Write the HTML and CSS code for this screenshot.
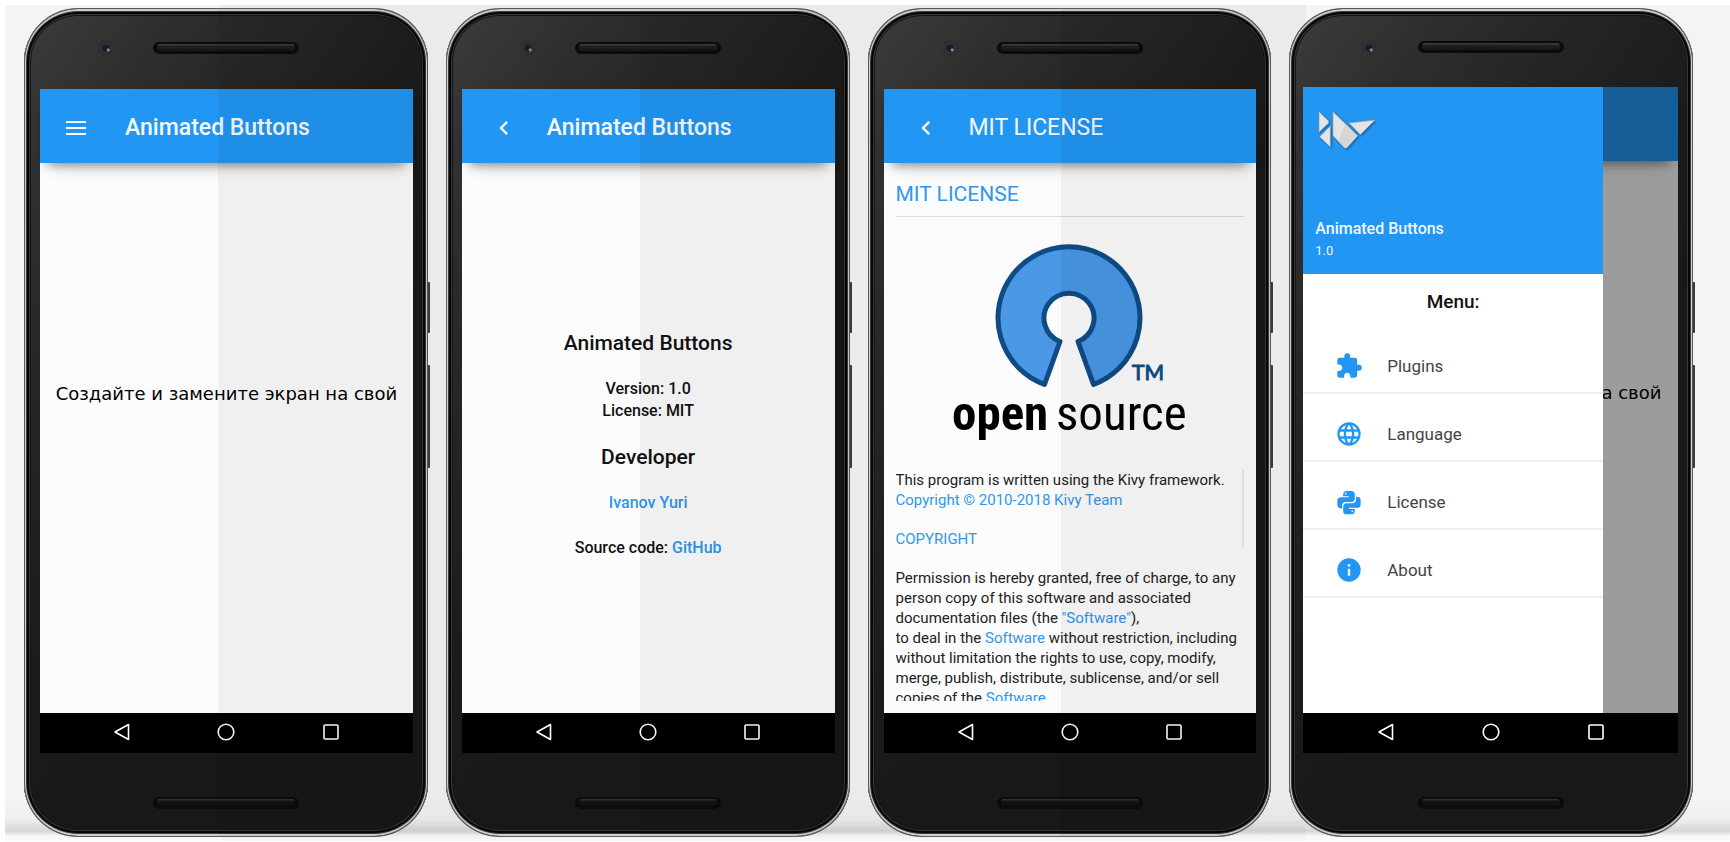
FILE: index.html
```html
<!DOCTYPE html>
<html lang="en">
<head>
<meta charset="utf-8">
<title>Animated Buttons</title>
<link rel="stylesheet" href="styles.css">
</head>
<body>
<svg width="0" height="0" class="defs" aria-hidden="true">
  <symbol id="i-back" viewBox="0 0 20 20"><path d="M16.500 2.500V17.500L3 10Z" fill="none" stroke="#fff" stroke-width="1.600" stroke-linejoin="round"/></symbol>
  <symbol id="i-home" viewBox="0 0 20 20"><circle cx="10" cy="10" r="7.800" fill="none" stroke="#fff" stroke-width="1.600"/></symbol>
  <symbol id="i-recent" viewBox="0 0 20 20"><rect x="3" y="3" width="14" height="14" rx="1" fill="none" stroke="#fff" stroke-width="1.600"/></symbol>
  <symbol id="i-chevron" viewBox="0 0 24 24"><path d="M15.410 16.580L10.830 12l4.580-4.590L14 6l-6 6 6 6z" fill="#fff"/></symbol>
  <symbol id="i-menu" viewBox="0 0 20 14"><path d="M0 0h20v2H0zM0 6h20v2H0zM0 12h20v2H0z" fill="#fff"/></symbol>
</svg>

<main class="stage">
  <section class="phone">
    <div class="side-keys"></div>
    <div class="bezel bezel-top"><span class="camera"></span><span class="speaker"></span></div>
    <div class="screen">
      <header class="toolbar">
        <button class="tool tool-menu" aria-label="Open menu"><svg width="20" height="14"><use href="#i-menu"/></svg></button>
        <h1 class="title">Animated Buttons</h1>
      </header>
      <div class="body body-empty"><p class="placeholder" lang="ru">Создайте и замените экран на свой</p></div>
    </div>
    <div class="sysnav">
      <button aria-label="Back"><svg width="20" height="20"><use href="#i-back"/></svg></button>
      <button aria-label="Home"><svg width="20" height="20"><use href="#i-home"/></svg></button>
      <button aria-label="Recent apps"><svg width="20" height="20"><use href="#i-recent"/></svg></button>
    </div>
    <div class="bezel bezel-bottom"><span class="speaker"></span></div>
    <div class="sheen"></div>
  </section>

  <section class="phone">
    <div class="side-keys"></div>
    <div class="bezel bezel-top"><span class="camera"></span><span class="speaker"></span></div>
    <div class="screen">
      <header class="toolbar">
        <button class="tool" aria-label="Go back"><svg width="28" height="28"><use href="#i-chevron"/></svg></button>
        <h1 class="title">Animated Buttons</h1>
      </header>
      <div class="body body-about">
        <h2 class="about-title">Animated Buttons</h2>
        <p class="about-text">Version: 1.0<br>License: MIT</p>
        <h2 class="about-title">Developer</h2>
        <p class="about-text"><a href="#author">Ivanov Yuri</a></p>
        <p class="about-text">Source code: <a href="#github">GitHub</a></p>
      </div>
    </div>
    <div class="sysnav">
      <button aria-label="Back"><svg width="20" height="20"><use href="#i-back"/></svg></button>
      <button aria-label="Home"><svg width="20" height="20"><use href="#i-home"/></svg></button>
      <button aria-label="Recent apps"><svg width="20" height="20"><use href="#i-recent"/></svg></button>
    </div>
    <div class="bezel bezel-bottom"><span class="speaker"></span></div>
    <div class="sheen"></div>
  </section>

  <section class="phone">
    <div class="side-keys"></div>
    <div class="bezel bezel-top"><span class="camera"></span><span class="speaker"></span></div>
    <div class="screen">
      <header class="toolbar">
        <button class="tool" aria-label="Go back"><svg width="28" height="28"><use href="#i-chevron"/></svg></button>
        <h1 class="title title-regular">MIT LICENSE</h1>
      </header>
      <div class="body body-license">
        <h2 class="license-title">MIT LICENSE</h2>
        <svg class="osi" width="240" height="206" viewBox="0 0 240 206">
          <path d="M94.500 144.500A71 71 0 1 1 143.500 144.500L128 101.500A25 25 0 1 0 110 101.500Z" fill="#4a98e6" stroke="#0f4c86" stroke-width="5" stroke-linejoin="round"/>
          <text class="osi-tm" x="182" y="140">TM</text>
          <text class="osi-open" x="2" y="190">open</text>
          <text class="osi-source" x="106" y="190">source</text>
        </svg>
        <div class="license-scroll">
          <div class="license-text">
            <p>This program is written using the Kivy framework.<br><a href="#kivy">Copyright © 2010-2018 Kivy Team</a></p>
            <p><a href="#copyright">COPYRIGHT</a></p>
            <p>Permission is hereby granted, free of charge, to any<br>person copy of this software and associated<br>documentation files (the <a href="#software">"Software"</a>),<br>to deal in the <a href="#software">Software</a> without restriction, including<br>without limitation the rights to use, copy, modify,<br>merge, publish, distribute, sublicense, and/or sell<br>copies of the <a href="#software">Software</a>.</p>
          </div>
          <span class="scroll-thumb"></span>
        </div>
      </div>
    </div>
    <div class="sysnav">
      <button aria-label="Back"><svg width="20" height="20"><use href="#i-back"/></svg></button>
      <button aria-label="Home"><svg width="20" height="20"><use href="#i-home"/></svg></button>
      <button aria-label="Recent apps"><svg width="20" height="20"><use href="#i-recent"/></svg></button>
    </div>
    <div class="bezel bezel-bottom"><span class="speaker"></span></div>
    <div class="sheen"></div>
  </section>

  <section class="phone phone-drawer">
    <div class="side-keys"></div>
    <div class="bezel bezel-top"><span class="camera"></span><span class="speaker"></span></div>
    <div class="screen">
      <header class="toolbar"></header>
      <div class="body body-empty"><p class="placeholder" lang="ru">Создайте и замените экран на свой</p></div>
      <div class="scrim"></div>
      <nav class="drawer">
        <div class="drawer-head">
          <svg class="kivy" width="62" height="42" viewBox="105 326 186 126">
            <g fill="#e4e4e4" stroke="#9aa4ad" stroke-width="2" stroke-linejoin="round">
              <path d="M117 334L146 362V368L117 396Z"/>
              <path d="M151 377V440L119 409Z"/>
              <path d="M159 334L233 406L200 443H194L159 406Z"/>
              <path d="M207 368L285 359L241 403Z"/>
            </g>
            <path d="M194 374L232 407L200 442H194L175 422Z" fill="#d6d6d6"/>
          </svg>
          <div class="drawer-name">Animated Buttons</div>
          <div class="drawer-version">1.0</div>
        </div>
        <h2 class="drawer-label">Menu:</h2>
        <a class="item" href="#plugins">
          <svg width="28" height="28" viewBox="0 0 24 24"><path d="M20.500,11H19V7C19,5.890 18.100,5 17,5H13V3.500A2.500,2.500 0 0,0 10.500,1A2.500,2.500 0 0,0 8,3.500V5H4A2,2 0 0,0 2,7V10.800H3.500C5,10.800 6.200,12 6.200,13.500C6.200,15 5,16.200 3.500,16.200H2V20A2,2 0 0,0 4,22H7.800V20.500C7.800,19 9,17.800 10.500,17.800C12,17.800 13.200,19 13.200,20.500V22H17A2,2 0 0,0 19,20V16H20.500A2.500,2.500 0 0,0 23,13.500A2.500,2.500 0 0,0 20.500,11Z"/></svg>
          <span>Plugins</span></a>
        <a class="item" href="#language">
          <svg width="28" height="28" viewBox="0 0 24 24"><path d="M16.360,14C16.440,13.340 16.500,12.680 16.500,12C16.500,11.320 16.440,10.660 16.360,10H19.740C19.900,10.640 20,11.310 20,12C20,12.690 19.900,13.360 19.740,14M14.590,19.560C15.190,18.450 15.650,17.250 15.970,16H18.920C17.960,17.650 16.430,18.930 14.590,19.560M14.340,14H9.660C9.560,13.340 9.500,12.680 9.500,12C9.500,11.320 9.560,10.650 9.660,10H14.340C14.430,10.650 14.500,11.320 14.500,12C14.500,12.680 14.430,13.340 14.340,14M12,19.960C11.170,18.760 10.500,17.430 10.090,16H13.910C13.500,17.430 12.830,18.760 12,19.960M8,8H5.080C6.030,6.340 7.570,5.060 9.400,4.440C8.800,5.550 8.350,6.750 8,8M5.080,16H8C8.350,17.250 8.800,18.450 9.400,19.560C7.570,18.930 6.030,17.650 5.080,16M4.260,14C4.100,13.360 4,12.690 4,12C4,11.310 4.100,10.640 4.260,10H7.640C7.560,10.660 7.500,11.320 7.500,12C7.500,12.680 7.560,13.340 7.640,14M12,4.030C12.830,5.230 13.500,6.570 13.910,8H10.090C10.500,6.570 11.170,5.230 12,4.030M18.920,8H15.970C15.650,6.750 15.190,5.550 14.590,4.440C16.430,5.070 17.960,6.340 18.920,8M12,2C6.470,2 2,6.500 2,12A10,10 0 0,0 12,22A10,10 0 0,0 22,12A10,10 0 0,0 12,2Z"/></svg>
          <span>Language</span></a>
        <a class="item" href="#license">
          <svg width="28" height="28" viewBox="0 0 24 24"><path d="M19.140,7.500A2.860,2.860 0 0,1 22,10.360V14.140A2.860,2.860 0 0,1 19.140,17H12C12,17.390 12.320,17.960 12.710,17.960H17V19.640A2.860,2.860 0 0,1 14.140,22.500H9.860A2.860,2.860 0 0,1 7,19.640V15.890C7,14.310 8.280,13.040 9.860,13.040H15.110C16.690,13.040 17.960,11.760 17.960,10.180V7.500H19.140M14.860,19.290C14.460,19.290 14.140,19.590 14.140,20.180C14.140,20.770 14.460,20.890 14.860,20.890A0.710,0.710 0 0,0 15.570,20.180C15.570,19.590 15.250,19.290 14.860,19.290M4.860,17.500C3.280,17.500 2,16.220 2,14.640V10.860C2,9.280 3.280,8 4.860,8H12C12,7.610 11.680,7.040 11.290,7.040H7V5.360C7,3.780 8.280,2.500 9.860,2.500H14.140C15.720,2.500 17,3.780 17,5.360V9.110C17,10.690 15.720,11.960 14.140,11.960H8.890C7.310,11.960 6.040,13.240 6.040,14.820V17.500H4.860M9.140,5.710C9.540,5.710 9.860,5.410 9.860,4.820C9.860,4.230 9.540,4.110 9.140,4.110C8.750,4.110 8.430,4.230 8.430,4.820C8.430,5.410 8.750,5.710 9.140,5.710Z"/></svg>
          <span>License</span></a>
        <a class="item" href="#about">
          <svg width="28" height="28" viewBox="0 0 24 24"><path d="M13,9H11V7H13M13,17H11V11H13M12,2A10,10 0 0,0 2,12A10,10 0 0,0 12,22A10,10 0 0,0 22,12A10,10 0 0,0 12,2Z"/></svg>
          <span>About</span></a>
      </nav>
    </div>
    <div class="sysnav">
      <button aria-label="Back"><svg width="20" height="20"><use href="#i-back"/></svg></button>
      <button aria-label="Home"><svg width="20" height="20"><use href="#i-home"/></svg></button>
      <button aria-label="Recent apps"><svg width="20" height="20"><use href="#i-recent"/></svg></button>
    </div>
    <div class="bezel bezel-bottom"><span class="speaker"></span></div>
  </section>
</main>
</body>
</html>
```

FILE: styles.css
```css
* { box-sizing: border-box; }

body {
  margin: 0;
  background: #fff;
  font-family: Roboto, "Liberation Sans", sans-serif;
  color: #111;
}

h1, h2, p { margin: 0; }
a { color: #2f97ee; text-decoration: none; }
button { border: 0; padding: 0; background: none; }
svg { display: block; flex: none; }
.defs { position: absolute; }

.stage {
  display: grid;
  grid-template-columns: repeat(4, minmax(0, 1fr));
  grid-template-rows: minmax(0, 1fr);
  gap: 18px;
  height: 100vh;
  min-height: 780px;
  padding: 3px 37px 4px 19px;
  border: solid #fff;
  border-width: 5px 0 1px 5px;
  background:
    linear-gradient(to top, rgba(255,255,255,.6), rgba(255,255,255,.3) 5px, rgba(0,0,0,.12) 10px, rgba(0,0,0,.02) 22px, transparent 40px),
    linear-gradient(to right, #f4f4f4 12.5%, #ebebeb 12.5% 75.4%, #f4f4f4 75.4%);
  background-clip: padding-box;
}

.phone {
  position: relative;
  display: flex;
  flex-direction: column;
  padding: 0 15px 0 16px;
  border: 1px solid #5a5a5a;
  border-width: 1px 0;
  border-radius: 54px;
  background: linear-gradient(125deg, #3c3c3c, #2c2c2c 18%, #1e1e1e 42%, #181818 60%);
  box-shadow:
    inset 1px 0 #5a5a5a, inset -1px 0 #5a5a5a,
    inset 0 0 0 2px #cfcfcf,
    inset 0 0 0 3px #3c3c3c,
    inset 0 0 0 5px #060606,
    inset 0 0 0 6px #383838,
    inset 0 0 0 7px #161616;
}

/* power and volume keys on the right edge */
.side-keys::before,
.side-keys::after {
  content: "";
  position: absolute;
  left: 100%;
  top: 273px;
  width: 2px;
  height: 51px;
  border-radius: 0 1px 1px 0;
  background: #3a3a3a;
}
.side-keys::after { top: 356px; height: 103px; }

.bezel { position: relative; flex: none; display: flex; justify-content: center; }
.bezel-top { height: 80px; padding-top: 33px; }
.bezel-bottom { height: 83px; padding-top: 44px; }
.phone-drawer { padding: 0 15px 0 14px; }
.phone-drawer .bezel-top { height: 78px; padding-top: 32px; }

.speaker {
  width: 146px;
  height: 12px;
  border: 4px solid #0b0b0b;
  border-width: 2px 4px 3px;
  border-radius: 6px;
  background: linear-gradient(#3a3a3a 1px, #222 2px, #151515);
}
.bezel-bottom .speaker { background: linear-gradient(#303030 1px, #141414 2px, #101010); }

.camera {
  position: absolute;
  left: 59px;
  top: 32px;
  width: 14px;
  height: 14px;
  border-radius: 50%;
  background:
    radial-gradient(circle at 66% 64%, #a8808c 0 1px, transparent 2px),
    radial-gradient(circle, #1e1a2c 0 3px, #38343c 5px, #262626 7px);
}

.screen {
  position: relative;
  display: flex;
  flex-direction: column;
  flex: 1;
  min-height: 0;
  background: #fcfcfc;
}

.toolbar {
  position: relative;
  flex: none;
  display: flex;
  align-items: center;
  height: 74px;
  padding-top: 3px;
  background: #2196f3;
  box-shadow: 0 10px 10px -8px rgba(0,0,0,.4), 0 8px 24px -10px rgba(0,0,0,.2);
}
.tool { flex: none; display: flex; align-items: center; justify-content: center; width: 85px; }
.tool-menu { padding-right: 13px; }
.title { font-size: 23px; font-weight: 500; line-height: 28px; color: #f6faff; }
.title-regular { font-weight: 400; }

.body { flex: 1; min-height: 0; display: flex; flex-direction: column; }

.body-empty { align-items: center; justify-content: center; padding-bottom: 88px; }
.placeholder {
  font: 400 18px/20px "DejaVu Sans", sans-serif;
  color: #000;
  white-space: nowrap;
}

.body-about { align-items: center; justify-content: center; gap: 23px; padding-top: 13px; text-align: center; }
.about-title { font-size: 21px; font-weight: 500; line-height: 24px; }
.about-text { font-size: 16px; font-weight: 500; line-height: 22px; }

.body-license { padding: 17px 12px 12px; }
.license-title {
  flex: none;
  padding-bottom: 8px;
  border-bottom: 1px solid #dcdcdc;
  font-size: 21px;
  font-weight: 400;
  line-height: 28px;
  color: #2f97ee;
}
.osi { margin: 23px auto 0; }
.osi-tm { font: 400 21px Lato, sans-serif; fill: #0f4c86; stroke: #0f4c86; stroke-width: 1px; }
.osi-open { font: 700 49px "Liberation Sans Narrow", "Roboto Condensed", Roboto, sans-serif; }
.osi-source { font: 400 49px "Liberation Sans Narrow", "Roboto Condensed", Roboto, sans-serif; }

.license-scroll { display: flex; justify-content: space-between; flex: 1; min-height: 0; margin-top: 24px; overflow: hidden; }
.license-text { font-size: 15px; line-height: 20px; color: #222; white-space: nowrap; }
.license-text p + p { margin-top: 19px; }
.scroll-thumb { flex: none; width: 2px; height: 77px; background: #e8e8e8; }

.scrim { position: absolute; inset: 0; background: rgba(0,0,0,.38); }

.drawer {
  position: absolute;
  left: 0;
  top: 0;
  bottom: 0;
  width: 80%;
  background: #fff;
}
.drawer-head { height: 187px; padding: 22px 12px 0; background: #2196f3; color: #f0f7ff; }
.kivy { filter: drop-shadow(1px 1px 1px rgba(0,0,0,.4)); }
.drawer-name { margin-top: 67px; font-size: 16px; font-weight: 500; line-height: 22px; }
.drawer-version { font-size: 13px; line-height: 22px; }
.drawer-label { padding-top: 16px; font-size: 19px; font-weight: 500; line-height: 24px; height: 52px; text-align: center; }
.item {
  display: flex;
  align-items: center;
  gap: 24px;
  height: 68px;
  padding: 14px 32px 0;
  border-bottom: 2px solid #efefef;
  font-size: 17px;
  color: #444;
}
.item svg { fill: #2196f3; }

.sysnav {
  flex: none;
  display: flex;
  justify-content: center;
  height: 40px;
  padding-bottom: 3px;
  background: #000;
}
.sysnav button { display: flex; align-items: center; justify-content: center; width: 28%; }

.sheen {
  position: absolute;
  inset: 0 0 0 48%;
  border-radius: 0 54px 54px 0;
  background: rgba(0,0,0,.048);
  pointer-events: none;
}
```
